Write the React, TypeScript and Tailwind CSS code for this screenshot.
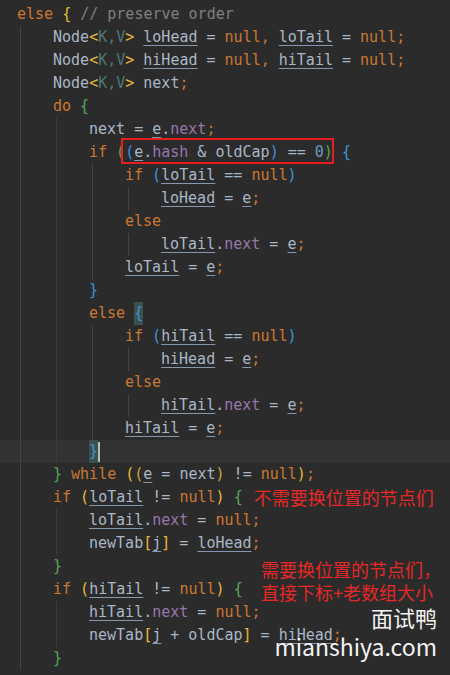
import React from 'react';

type Tok = [string, string, string?];
type Line = { indent: number; toks: (Tok | { box: Tok[] })[]; current?: boolean; note?: string; caret?: boolean };

const COLORS: Record<string, string> = {
  K: 'text-[#cc7832]',
  T: 'text-[#a9b7c6]',
  P: 'text-[#9876aa]',
  N: 'text-[#6897bb]',
  C: 'text-[#808080]',
  Y: 'text-[#e8ba36]',
  Y2: 'text-[#c9a63c]',
  G: 'text-[#54a857]',
  B: 'text-[#3b95dc]',
  TP: 'text-[#507874]',
};

const GUIDES = ['bg-[#47462f]', 'bg-[#2f462f]', 'bg-[#36485a]', 'bg-[#444444]'];

const node = (a: string, b: string): Tok[] => [
  ['Node', 'T'], ['<', 'Y'], ['K,V', 'TP'], ['>', 'Y'], [' ', 'T'],
  [a, 'T', 'u'], [' = ', 'T'], ['null', 'K'], [', ', 'K'], [b, 'T', 'u'], [' = ', 'T'], ['null', 'K'], [';', 'K'],
];

const ifNull = (v: string): Tok[] => [['if', 'K'], [' ', 'T'], ['(', 'B'], [v, 'T', 'u'], [' == ', 'T'], ['null', 'K'], [')', 'B']];
const assignE = (v: string): Tok[] => [[v, 'T', 'u'], [' = ', 'T'], ['e', 'T', 'u'], [';', 'K']];
const nextE = (v: string): Tok[] => [[v, 'T', 'u'], ['.', 'T'], ['next', 'P'], [' = ', 'T'], ['e', 'T', 'u'], [';', 'K']];
const ifNotNull = (v: string): Tok[] => [['if', 'K'], [' ', 'T'], ['(', 'Y'], [v, 'T', 'u'], [' != ', 'T'], ['null', 'K'], [')', 'Y'], [' ', 'T'], ['{', 'G']];
const nextNull = (v: string): Tok[] => [[v, 'T', 'u'], ['.', 'T'], ['next', 'P'], [' = ', 'T'], ['null', 'K'], [';', 'K']];

const LINES: Line[] = [
  { indent: 0, toks: [['else', 'K'], [' ', 'T'], ['{', 'Y'], [' // preserve order', 'C']] },
  { indent: 1, toks: node('loHead', 'loTail') },
  { indent: 1, toks: node('hiHead', 'hiTail') },
  { indent: 1, toks: [['Node', 'T'], ['<', 'Y'], ['K,V', 'TP'], ['>', 'Y'], [' next', 'T'], [';', 'K']] },
  { indent: 1, toks: [['do', 'K'], [' ', 'T'], ['{', 'G']] },
  { indent: 2, toks: [['next = ', 'T'], ['e', 'T', 'u'], ['.', 'T'], ['next', 'P'], [';', 'K']] },
  {
    indent: 2,
    toks: [
      ['if', 'K'], [' ', 'T'], ['(', 'G'],
      { box: [['(', 'B'], ['e', 'T', 'u'], ['.', 'T'], ['hash', 'P'], [' & oldCap', 'T'], [')', 'B'], [' == ', 'T'], ['0', 'N'], [')', 'G']] },
      [' ', 'T'], ['{', 'B'],
    ],
  },
  { indent: 3, toks: ifNull('loTail') },
  { indent: 4, toks: assignE('loHead') },
  { indent: 3, toks: [['else', 'K']] },
  { indent: 4, toks: nextE('loTail') },
  { indent: 3, toks: assignE('loTail') },
  { indent: 2, toks: [['}', 'B']] },
  { indent: 2, toks: [['else', 'K'], [' ', 'T'], ['{', 'B', 'h']] },
  { indent: 3, toks: ifNull('hiTail') },
  { indent: 4, toks: assignE('hiHead') },
  { indent: 3, toks: [['else', 'K']] },
  { indent: 4, toks: nextE('hiTail') },
  { indent: 3, toks: assignE('hiTail') },
  { indent: 2, toks: [['}', 'B', 'h']], current: true, caret: true },
  {
    indent: 1,
    toks: [
      ['}', 'G'], [' ', 'T'], ['while', 'K'], [' ', 'T'], ['(', 'Y'], ['(', 'Y2'], ['e', 'T', 'u'], [' = next', 'T'], [')', 'Y2'],
      [' != ', 'T'], ['null', 'K'], [')', 'Y'], [';', 'K'],
    ],
  },
  { indent: 1, toks: ifNotNull('loTail'), note: '不需要换位置的节点们' },
  { indent: 2, toks: nextNull('loTail') },
  { indent: 2, toks: [['newTab', 'T'], ['[', 'Y'], ['j', 'T', 'u'], [']', 'Y'], [' = ', 'T'], ['loHead', 'T', 'u'], [';', 'K']] },
  { indent: 1, toks: [['}', 'G']] },
  { indent: 1, toks: ifNotNull('hiTail') },
  { indent: 2, toks: nextNull('hiTail') },
  {
    indent: 2,
    toks: [['newTab', 'T'], ['[', 'Y'], ['j', 'T', 'u'], [' + oldCap', 'T'], [']', 'Y'], [' = ', 'T'], ['hiHead', 'T', 'u'], [';', 'K']],
  },
  { indent: 1, toks: [['}', 'G']] },
];

function TokSpan({ tok }: { tok: Tok }) {
  const [text, c, f] = tok;
  let cls = COLORS[c];
  if (f === 'u') cls += ' underline decoration-[#8397ad] underline-offset-[3px]';
  if (f === 'h') cls += ' inline-block h-[23px] bg-[#3b514d]';
  return <span className={cls}>{text}</span>;
}

export default function App() {
  return (
    <div className="relative w-[450px] h-[675px] overflow-hidden bg-[#2b2b2b]">
      <div className="pt-[3px] font-['DejaVu_Sans_Mono',monospace] text-[15px] leading-[23px]">
        {LINES.map((line, i) => (
          <div key={i} className={`flex h-[23px] pl-[17px] ${line.current ? 'bg-[#323232]' : ''}`}>
            {Array.from({ length: line.indent }).map((_, k) => (
              <div key={k} className="w-[36px] shrink-0 h-full">
                <div className={`ml-[3px] w-px h-full ${GUIDES[k]}`} />
              </div>
            ))}
            <div className="flex items-center whitespace-pre h-full">
              <span className="whitespace-pre">
                {line.toks.map((tk, j) =>
                  Array.isArray(tk) ? (
                    <TokSpan key={j} tok={tk} />
                  ) : (
                    <span key={j} className="relative inline-block h-[23px]">
                      {tk.box.map((b, m) => (
                        <TokSpan key={m} tok={b} />
                      ))}
                      <span className="absolute -left-[4px] -right-[1px] -top-[3px] bottom-0 border-2 border-[#e3201f]" />
                    </span>
                  )
                )}
              </span>
              {line.caret && <span className="inline-block w-[2px] h-[20px] bg-[#bbbbbb]" />}
              {line.note && (
                <span className="ml-[11px] font-['Noto_Sans_CJK_SC',sans-serif] text-[18px] leading-[23px] text-[#e62828]">
                  {line.note}
                </span>
              )}
            </div>
          </div>
        ))}
      </div>

      <div className="absolute left-[261px] top-[558px] flex flex-col font-['Noto_Sans_CJK_SC',sans-serif] text-[18px] leading-[23px] text-[#e62828] whitespace-pre">
        <span>需要换位置的节点们，</span>
        <span>直接下标+老数组大小</span>
      </div>

      <div className="absolute right-[13px] top-[603px] flex flex-col items-end font-['Noto_Sans_CJK_SC',sans-serif] text-[#f4f4f4]">
        <span className="text-[22px] leading-[28px]">面试鸭</span>
        <span className="text-[23px] leading-[30px]">mianshiya.com</span>
      </div>
    </div>
  );
}
